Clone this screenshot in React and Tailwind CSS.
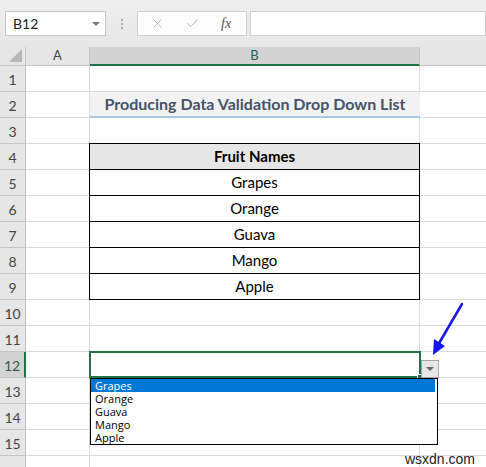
import { X, Check } from 'lucide-react'

const fruits = ['Grapes', 'Orange', 'Guava', 'Mango', 'Apple']
const rows = Array.from({ length: 16 }, (_, i) => i + 1)

// grid lines for sheet rows; grid row 1 holds the column letters
const rowStart = [
  'row-start-1', 'row-start-2', 'row-start-3', 'row-start-4', 'row-start-5', 'row-start-6',
  'row-start-7', 'row-start-8', 'row-start-9', 'row-start-10', 'row-start-11', 'row-start-12',
  'row-start-13', 'row-start-14', 'row-start-15', 'row-start-16', 'row-start-17',
]

function FormulaBar() {
  return (
    <div className="flex h-[47px] items-start bg-gradient-to-b from-[#efefef] to-[#e6e6e6] pt-[11px] pl-[5px]">
      <div className="flex h-[25px] w-[101px] items-center justify-between border border-[#c6c6c6] bg-white pl-[7px] pr-[5px]">
        <span className="text-[14px] text-[#222]">B12</span>
        <span className="h-0 w-0 border-x-[4px] border-t-[4px] border-x-transparent border-t-[#777]" />
      </div>
      <div className="ml-[15px] mr-[14px] flex flex-col gap-[2px] pt-[8px]">
        <span className="h-[2px] w-[2px] bg-[#aaa]" />
        <span className="h-[2px] w-[2px] bg-[#aaa]" />
        <span className="h-[2px] w-[2px] bg-[#aaa]" />
      </div>
      <div className="flex h-[25px] w-[110px] items-center border border-[#cfcfcf] bg-[#fdfdfd] pl-[12px]">
        <X size={15} strokeWidth={1.2} className="text-[#a8a8a8]" />
        <Check size={15} strokeWidth={1.4} className="ml-[20px] text-[#a8a8a8]" />
        <span className="ml-[21px] font-['Liberation_Serif',serif] text-[14px] italic text-[#555]">fx</span>
      </div>
      <div className="ml-[3px] h-[25px] flex-1 border border-[#cfcfcf] bg-white" />
    </div>
  )
}

function Sheet() {
  return (
    <div className="relative grid grid-cols-[26px_64px_330px_1fr] grid-rows-[19px_repeat(16,26px)] font-['Lato',sans-serif]">
      {/* column headers */}
      <div className="relative col-start-1 row-start-1 border-b border-r border-[#c4c4c4] bg-[#e6e6e6]">
        <svg className="absolute bottom-[3px] right-[3px]" width="13" height="13" viewBox="0 0 13 13">
          <polygon points="13,0 13,13 0,13" fill="#b7b7b7" />
        </svg>
      </div>
      <div className="col-start-2 row-start-1 flex items-center justify-center border-b border-r border-[#c4c4c4] bg-[#e6e6e6] text-[13px] text-[#444]">A</div>
      <div className="col-start-3 row-start-1 flex items-center justify-center border-b-2 border-r border-b-[#217346] border-r-[#c4c4c4] bg-[#d3d3d3] text-[13px] text-[#2f5d45]">B</div>
      <div className="col-start-4 row-start-1 border-b border-[#c4c4c4] bg-[#e6e6e6]" />

      {/* row headers and empty cells */}
      {rows.map((r) => (
        <div key={r} className="contents">
          <div
            className={`col-start-1 ${rowStart[r]} ${
              r === 12
                ? 'border-b-[#c4c4c4] border-r-2 border-r-[#217346] bg-[#d3d3d3] text-[#2f5d45]'
                : 'border-r border-[#c4c4c4] bg-[#e6e6e6] text-[#444]'
            } flex items-center justify-center border-b pt-[2px] text-[14px]`}
          >
            {r < 16 ? r : null}
          </div>
          <div className={`col-start-2 ${rowStart[r]} border-b border-r border-[#dadada] bg-white`} />
          <div className={`col-start-3 ${rowStart[r]} border-b border-r border-[#dadada] bg-white`} />
          <div className={`col-start-4 ${rowStart[r]} border-b border-[#dadada] bg-white`} />
        </div>
      ))}

      {/* title in B2 */}
      <div className="col-start-3 row-start-3 flex items-center justify-center border-b-2 border-[#a9c8e6] bg-[#f2f2f2] text-[16px] font-bold text-[#44546a]">
        Producing Data Validation Drop Down List
      </div>

      {/* fruit table B4:B9 */}
      <div className="col-start-3 row-start-5 row-span-6 -ml-px -mt-px flex w-[331px] flex-col self-start border-x border-t border-black">
        <div className="flex h-[26px] items-center justify-center border-b border-black bg-[#e7e6e6] text-[15px] font-bold text-black">
          Fruit Names
        </div>
        {fruits.map((f) => (
          <div key={f} className="flex h-[26px] items-center justify-center border-b border-black bg-white text-[15px] text-black">
            {f}
          </div>
        ))}
      </div>

      {/* active cell B12 with validation list */}
      <div className="relative col-start-3 row-start-13 -ml-px -mt-px h-[27px] w-[332px] self-start border-2 border-[#217346]">
        <span className="absolute -bottom-[3px] -right-[3px] h-[5px] w-[5px] border border-white bg-[#217346]" />
        <div className="absolute left-[-1px] top-[25px] z-10 flex h-[67px] w-[348px] flex-col border border-black bg-white pr-[2px] font-['Open_Sans',sans-serif] text-[11px] leading-[13px] text-black">
          {fruits.map((f, i) => (
            <div key={f} className={i === 0 ? 'h-[13px] bg-[#0078d7] pl-[4px] text-white' : 'h-[13px] pl-[4px]'}>
              {f}
            </div>
          ))}
        </div>
        <div className="absolute left-[330px] top-[7px] flex h-[18px] w-[18px] items-center justify-center border border-[#a6a6a6] bg-[#e6e6e6]">
          <span className="h-0 w-0 border-x-[4px] border-t-[4px] border-x-transparent border-t-[#666]" />
        </div>
      </div>

      {/* pointer arrow */}
      <svg className="pointer-events-none absolute left-[426px] top-[252px]" width="44" height="62" viewBox="0 0 44 62">
        <line x1="36" y1="5" x2="12" y2="46" stroke="#1515f0" strokeWidth="2.5" strokeLinecap="round" />
        <polygon points="7,56 8,40 19,47" fill="#1515f0" />
      </svg>

      <span className="absolute right-[11px] top-[404px] z-20 font-['Liberation_Sans',sans-serif] text-[14px] leading-[16px] text-[#222]">wsxdn.com</span>
    </div>
  )
}

export default function App() {
  return (
    <div className="h-[467px] w-[486px] overflow-hidden bg-white font-['Lato',sans-serif]">
      <FormulaBar />
      <Sheet />
    </div>
  )
}
